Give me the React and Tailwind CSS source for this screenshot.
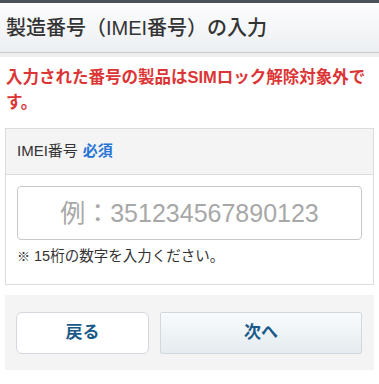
export default function App() {
  const font = { fontFamily: '"Liberation Sans", "Noto Sans CJK JP", sans-serif' };
  return (
    <div className="w-[379px] h-[384px] bg-white overflow-hidden" style={font}>
      <div className="h-[3px] bg-[#4b525a]" />
      <div className="h-[50px] flex items-center px-[6px] bg-gradient-to-b from-[#fdfdfe] to-[#eceff2] border-b border-[#c9cbcd]">
        <h1 className="text-[20px] text-[#333] font-medium leading-none">製造番号（IMEI番号）の入力</h1>
      </div>
      <div className="h-[4px] bg-[#efefef]" />
      <p className="px-[6px] pt-[8px] pb-[14px] text-[16.5px] leading-[24.5px] font-bold text-[#dc3535]">
        入力された番号の製品はSIMロック解除対象外です。
      </p>
      <div className="mx-[5px] border border-[#dcdcdc]">
        <div className="h-[46px] flex items-center px-[11px] bg-[#f4f4f4] border-b border-[#dcdcdc]">
          <span className="text-[15px] text-[#333]">IMEI番号</span>
          <span className="ml-[5px] text-[15px] font-bold text-[#2574d5]">必須</span>
        </div>
        <div className="px-[11px] pt-[11px] pb-[17px]">
          <input
            className="w-full h-[54px] rounded-[4px] border border-[#c8c8c8] bg-white text-center text-[25px] text-[#333] placeholder:text-[#a8a8a8] outline-none"
            style={font}
            placeholder="例：351234567890123"
          />
          <p className="mt-[6px] text-[14.5px] leading-[20px] text-[#333]">
            <span className="text-[13px]">※</span> 15桁の数字を入力ください。
          </p>
        </div>
      </div>
      <div className="mx-[5px] mt-[10px] h-[75px] bg-[#f4f4f4] flex items-center gap-[11px] pl-[11px] pr-[12px]">
        <button className="w-[133px] h-[42px] rounded-[6px] bg-white border border-[#d3d7de] text-[17px] font-bold text-[#1b5a88]" style={font}>
          戻る
        </button>
        <button className="flex-1 h-[42px] rounded-[2px] bg-gradient-to-b from-[#f8fbfd] to-[#e5ecef] border border-[#d3d7de] text-[17px] font-bold text-[#1b5a88]" style={font}>
          次へ
        </button>
      </div>
    </div>
  );
}
